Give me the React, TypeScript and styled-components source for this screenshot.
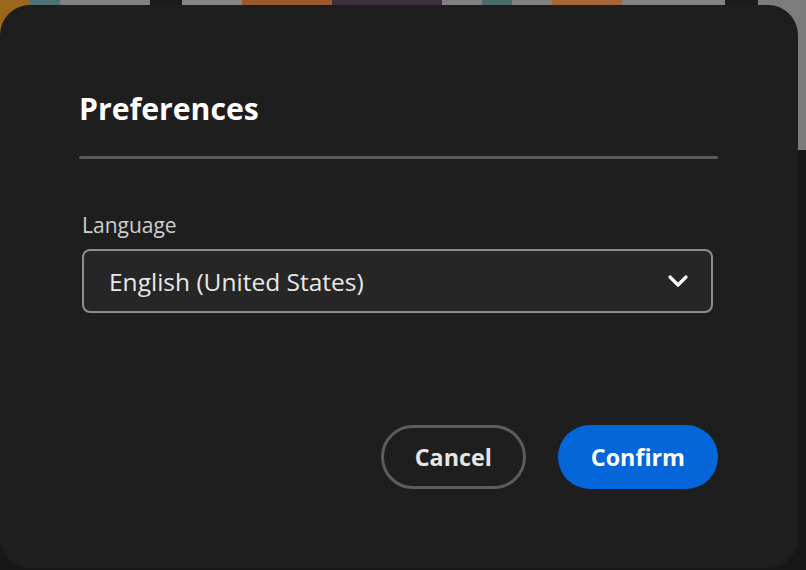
import { createGlobalStyle, styled } from 'styled-components'

const GlobalStyle = createGlobalStyle`
  html, body {
    margin: 0;
    padding: 0;
    background: #161616;
  }
  body {
    font-family: "Open Sans", Lato, sans-serif;
  }
`

const Stage = styled.div`
  position: relative;
  width: 806px;
  height: 570px;
  overflow: hidden;
  background: #171717;
`

// dimmed page content sitting behind the modal
const Backdrop = styled.div`
  display: flex;
  height: 40px;
`

const Tile = styled.div<{ $w: number; $bg: string }>`
  width: ${({ $w }) => $w}px;
  flex-shrink: 0;
  background: ${({ $bg }) => $bg};
`

const Scrollbar = styled.div`
  position: absolute;
  right: 0;
  top: 0;
  width: 8px;
  height: 150px;
  background: #7b7b7b;
`

const Dialog = styled.section`
  position: absolute;
  left: 0;
  top: 5px;
  width: 798px;
  height: 563px;
  box-sizing: border-box;
  padding: 84px 80px 0 79px;
  background: #1e1e1e;
  border-radius: 30px;
  display: flex;
  flex-direction: column;
`

const Title = styled.h2`
  margin: 0;
  font-size: 30.2px;
  line-height: 40px;
  font-weight: 700;
  color: #ffffff;
`

const Divider = styled.hr`
  margin: 27px 0 0;
  border: none;
  height: 3px;
  border-radius: 2px;
  background: #5a5a5a;
`

const Field = styled.div`
  margin: 52px 5px 0 3px;
  display: flex;
  flex-direction: column;
  gap: 10px;
`

const Label = styled.label`
  font-size: 21px;
  line-height: 28px;
  color: #cfcfcf;
`

const Picker = styled.button`
  display: flex;
  align-items: center;
  justify-content: space-between;
  height: 64px;
  box-sizing: border-box;
  padding: 0 22px 0 25px;
  background: #262626;
  border: 2px solid #8d8d8d;
  border-radius: 8px;
  font-family: inherit;
  font-size: 24.5px;
  color: #e8e8e8;
  text-align: left;
`

const Footer = styled.div`
  margin-top: auto;
  margin-bottom: 79px;
  display: flex;
  justify-content: flex-end;
  gap: 32px;
`

const Button = styled.button<{ $primary?: boolean }>`
  height: 64px;
  box-sizing: border-box;
  padding: 0 ${({ $primary }) => ($primary ? 33 : 31)}px;
  border-radius: 32px;
  font-family: inherit;
  font-size: 23.3px;
  font-weight: 700;
  color: ${({ $primary }) => ($primary ? '#ffffff' : '#e6e6e6')};
  background: ${({ $primary }) => ($primary ? '#0566d9' : 'transparent')};
  border: ${({ $primary }) => ($primary ? 'none' : '3px solid #5c5c5c')};
`

function Chevron() {
  return (
    <svg width="22" height="14" viewBox="0 0 22 14" fill="none">
      <path d="M3 3l8 8 8-8" stroke="#ffffff" strokeWidth="3.2" strokeLinecap="round" strokeLinejoin="round" />
    </svg>
  )
}

const tiles: [number, string][] = [
  [30, '#9c661c'],
  [30, '#4b7477'],
  [90, '#828282'],
  [32, '#1b1b1b'],
  [60, '#858585'],
  [90, '#9a5a2a'],
  [110, '#3a2f3a'],
  [40, '#7f7f7f'],
  [30, '#4a6c6e'],
  [40, '#807f7c'],
  [70, '#a6663a'],
  [103, '#838383'],
  [33, '#1b1b1b'],
  [48, '#7c7c7c'],
]

export default function App() {
  return (
    <Stage>
      <GlobalStyle />
      <Backdrop>
        {tiles.map(([w, bg], i) => (
          <Tile key={i} $w={w} $bg={bg} />
        ))}
      </Backdrop>
      <Scrollbar />
      <Dialog role="dialog" aria-label="Preferences">
        <Title>Preferences</Title>
        <Divider />
        <Field>
          <Label>Language</Label>
          <Picker type="button">
            <span>English (United States)</span>
            <Chevron />
          </Picker>
        </Field>
        <Footer>
          <Button type="button">Cancel</Button>
          <Button type="button" $primary>
            Confirm
          </Button>
        </Footer>
      </Dialog>
    </Stage>
  )
}
